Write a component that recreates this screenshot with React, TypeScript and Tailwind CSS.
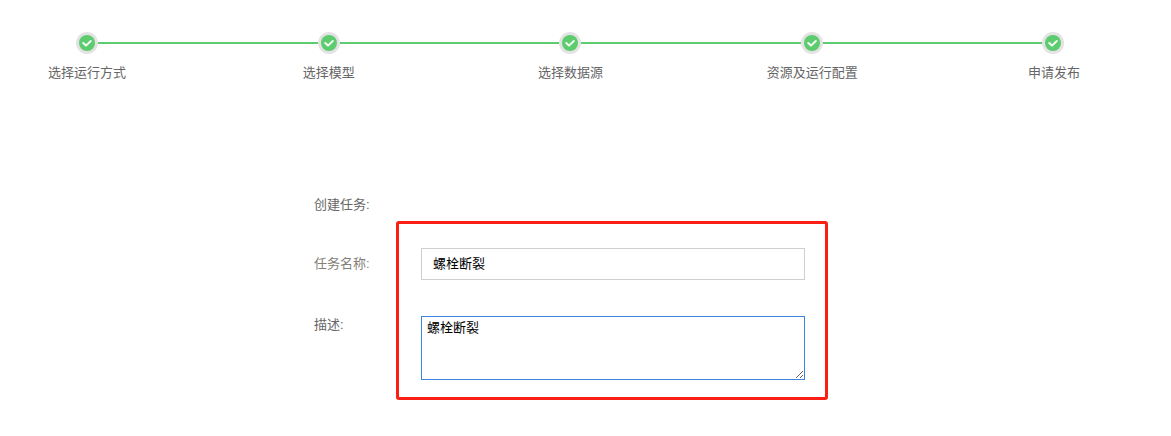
const steps = ["选择运行方式", "选择模型", "选择数据源", "资源及运行配置", "申请发布"];

function Dot() {
  return (
    <div className="flex h-[22px] w-[22px] shrink-0 items-center justify-center rounded-full bg-[#e3e3e3]">
      <div className="flex h-[16px] w-[16px] items-center justify-center rounded-full bg-[#5ccc6e]">
        <svg viewBox="0 0 16 16" className="h-[16px] w-[16px]" fill="none">
          <path d="M4.2 8 L7 10.6 L11.8 6" stroke="#f4fbf5" strokeWidth="2" strokeLinecap="round" strokeLinejoin="round" />
        </svg>
      </div>
    </div>
  );
}

export default function App() {
  const font = "font-['Liberation_Sans','Noto_Sans_CJK_SC',sans-serif]";
  return (
    <div className={`h-[436px] w-[1171px] overflow-hidden bg-white text-[13px] text-[#666] ${font}`}>
      <div className="pl-[76px] pr-[107px] pt-[32px]">
        <div className="flex items-center">
          {steps.map((s, i) => (
            <div key={s} className={i < 4 ? "flex flex-1 items-center" : "flex items-center"}>
              <Dot />
              {i < 4 && <div className="h-[2px] flex-1 bg-[#5ccc6e]" />}
            </div>
          ))}
        </div>
      </div>
      <div className="flex justify-between pl-[37px] pr-[67px] pt-[9px]">
        {steps.map((s) => (
          <div key={s} className="w-[100px] text-center leading-[20px]">{s}</div>
        ))}
      </div>

      <div className="relative ml-[314px] mt-[112px] w-[491px]">
        <div className="leading-[20px]">创建任务:</div>
        <div className="mt-[33px] flex items-center">
          <div className="w-[107px] leading-[20px] text-[#857f7a]">任务名称:</div>
          <div className="flex h-[32px] w-[384px] items-center border border-[#cfcfcf] pl-[11px] text-black">螺栓断裂</div>
        </div>
        <div className="mt-[36px] flex">
          <div className="w-[107px] leading-[18px]">描述:</div>
          <textarea
            readOnly
            defaultValue="螺栓断裂"
            className="h-[64px] w-[384px] resize-y border border-[#3c85dc] px-[5px] py-[1px] leading-[20px] text-black outline-none"
          />
        </div>
        <div className="absolute left-[82px] top-[26px] h-[179px] w-[432px] rounded-[3px] border-[3px] border-[#fa1e14]" />
      </div>
    </div>
  );
}
